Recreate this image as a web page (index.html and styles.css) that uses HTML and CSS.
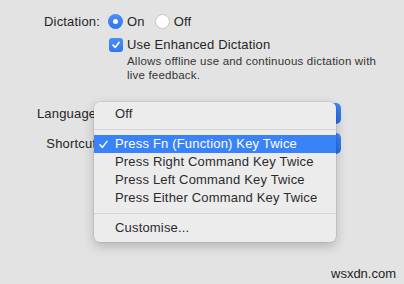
FILE: index.html
```html
<!DOCTYPE html>
<html>
<head>
    <title>Dictation</title>
    <link rel="stylesheet" href="styles.css">
</head>
<body>
    <div class="pane">
        <div class="row row-dictation">
            <div class="label">Dictation:</div>
            <div class="controls">
                <span class="radio radio-on"></span>
                <span class="opt">On</span>
                <span class="radio radio-off"></span>
                <span class="opt">Off</span>
            </div>
        </div>
        <div class="row row-check">
            <div class="label"></div>
            <div class="controls">
                <span class="checkbox">
                    <svg width="10" height="10" viewBox="0 0 10 10"><path d="M2 5.2 L4.2 7.4 L8 2.4" fill="none" stroke="#fff" stroke-width="1.7" stroke-linecap="round" stroke-linejoin="round"/></svg>
                </span>
                <span class="opt">Use Enhanced Dictation</span>
            </div>
        </div>
        <div class="desc">Allows offline use and continuous dictation with<br>live feedback.</div>
        <div class="row row-language">
            <div class="label">Language:</div>
            <div class="popup"></div>
        </div>
        <div class="row row-shortcut">
            <div class="label">Shortcut:</div>
            <div class="popup"></div>
        </div>
    </div>

    <div class="menu">
        <div class="item">Off</div>
        <div class="sep"></div>
        <div class="item selected">
            <svg class="tick" width="9" height="9" viewBox="0 0 9 9"><path d="M1 4.8 L3.4 7.4 L8 1.4" fill="none" stroke="#fff" stroke-width="1.5" stroke-linecap="round" stroke-linejoin="round"/></svg>
            Press Fn (Function) Key Twice
        </div>
        <div class="item">Press Right Command Key Twice</div>
        <div class="item">Press Left Command Key Twice</div>
        <div class="item">Press Either Command Key Twice</div>
        <div class="sep"></div>
        <div class="item">Customise...</div>
    </div>

    <div class="watermark">wsxdn.com</div>
</body>
</html>
```
FILE: styles.css
```css
body {
    font-family: "Liberation Sans", Arial, sans-serif;
    font-size: 13px;
    letter-spacing: 0.18px;
    color: #262626;
    margin: 0;
    padding: 0;
    background-color: #e3e3e3;
    width: 404px;
    height: 284px;
    overflow: hidden;
}

.pane {
    padding-top: 10px;
}

.row {
    display: flex;
    align-items: center;
}

.label {
    width: 100px;
    text-align: right;
    margin-right: 8px;
    flex-shrink: 0;
}

.controls {
    display: flex;
    align-items: center;
}

.row-dictation {
    height: 22px;
}

.row-check {
    height: 19px;
    margin-top: 3px;
}

.radio {
    width: 15px;
    height: 15px;
    border-radius: 50%;
    box-sizing: border-box;
    display: inline-flex;
    align-items: center;
    justify-content: center;
}

.radio-on {
    background: linear-gradient(#4a8ff8, #2f76ef);
}

.radio-on::after {
    content: "";
    width: 5px;
    height: 5px;
    border-radius: 50%;
    background-color: #fff;
}

.radio-off {
    background-color: #fff;
    border: 1px solid #c4c4c4;
    margin-left: 10px;
}

.opt {
    margin-left: 4px;
}

.checkbox {
    width: 14px;
    height: 14px;
    margin-left: 1px;
    border-radius: 3px;
    background: linear-gradient(#4a8ff8, #2f76ef);
    display: inline-flex;
    align-items: center;
    justify-content: center;
}

.checkbox + .opt {
    margin-left: 4px;
}

.desc {
    margin-left: 127px;
    font-size: 11.5px;
    letter-spacing: 0.2px;
    line-height: 14px;
    color: #333;
}

.row-language {
    height: 22px;
    margin-top: 20px;
}

.row-shortcut {
    height: 21px;
    margin-top: 9px;
}

.popup {
    width: 233px;
    height: 21px;
    border-radius: 5px;
    background: linear-gradient(#3e88f7, #2a6ee3);
}

.menu {
    position: absolute;
    left: 94px;
    top: 102px;
    width: 242px;
    padding: 3px 0 5px;
    background-color: #ececec;
    border-radius: 6px;
    box-shadow: 0 0 0 0.5px rgba(0, 0, 0, 0.12), 0 4px 12px rgba(0, 0, 0, 0.22);
    color: #2b2b2b;
}

.item {
    position: relative;
    height: 18px;
    line-height: 18px;
    padding-left: 21px;
}

.item.selected {
    background-color: #3a82f7;
    color: #fff;
}

.tick {
    position: absolute;
    left: 5px;
    top: 5px;
}

.sep {
    height: 12px;
    position: relative;
}

.sep::after {
    content: "";
    position: absolute;
    left: 0;
    right: 0;
    top: 6px;
    height: 1px;
    background-color: #d6d6d6;
}

.watermark {
    position: absolute;
    left: 331px;
    top: 266px;
    font-size: 13px;
    letter-spacing: 0;
    color: #1e1e1e;
}
```
